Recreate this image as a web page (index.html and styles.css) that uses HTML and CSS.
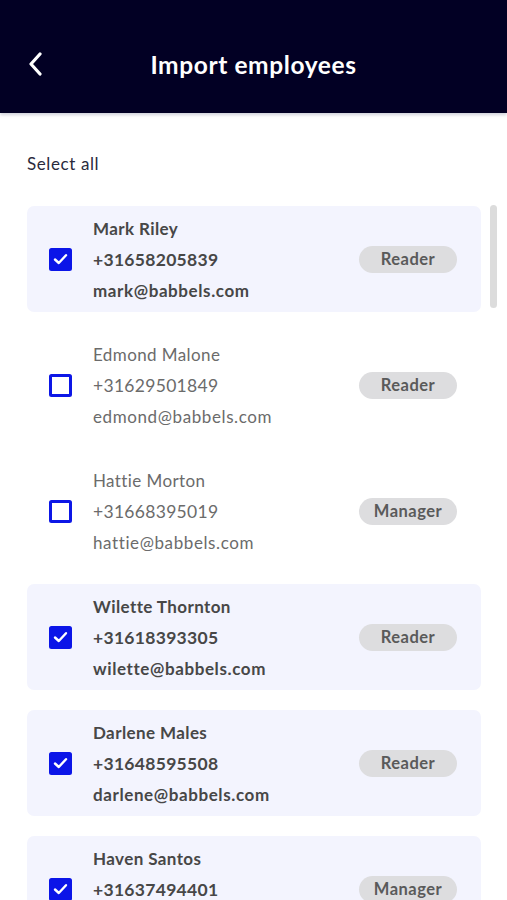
FILE: index.html
```html
<!DOCTYPE html>
<html lang="en">
<head>
<meta charset="utf-8">
<title>Import employees</title>
<link rel="stylesheet" href="styles.css">
</head>
<body>
<header class="topbar">
  <button class="back" aria-label="Back">
    <svg width="20" height="24" viewBox="0 0 20 24"><path d="M14 2 L5 12 L14 22" fill="none" stroke="#fff" stroke-width="3.2" stroke-linecap="round" stroke-linejoin="round"/></svg>
  </button>
  <h1 class="title">Import employees</h1>
  <span class="spacer"></span>
</header>

<main class="content">
  <div class="select-all">Select all</div>

  <div class="list">
    <div class="scrollbar"></div>

    <div class="card selected">
      <span class="check on"><svg width="15" height="12" viewBox="0 0 15 12"><path d="M2 6.5 L5.8 10 L13 2.2" fill="none" stroke="#fff" stroke-width="2.4" stroke-linecap="round" stroke-linejoin="round"/></svg></span>
      <div class="info"><div class="name">Mark Riley</div><div class="phone">+31658205839</div><div class="email">mark@babbels.com</div></div>
      <span class="badge">Reader</span>
    </div>

    <div class="card">
      <span class="check"></span>
      <div class="info"><div class="name">Edmond Malone</div><div class="phone">+31629501849</div><div class="email">edmond@babbels.com</div></div>
      <span class="badge">Reader</span>
    </div>

    <div class="card">
      <span class="check"></span>
      <div class="info"><div class="name">Hattie Morton</div><div class="phone">+31668395019</div><div class="email">hattie@babbels.com</div></div>
      <span class="badge">Manager</span>
    </div>

    <div class="card selected">
      <span class="check on"><svg width="15" height="12" viewBox="0 0 15 12"><path d="M2 6.5 L5.8 10 L13 2.2" fill="none" stroke="#fff" stroke-width="2.4" stroke-linecap="round" stroke-linejoin="round"/></svg></span>
      <div class="info"><div class="name">Wilette Thornton</div><div class="phone">+31618393305</div><div class="email">wilette@babbels.com</div></div>
      <span class="badge">Reader</span>
    </div>

    <div class="card selected">
      <span class="check on"><svg width="15" height="12" viewBox="0 0 15 12"><path d="M2 6.5 L5.8 10 L13 2.2" fill="none" stroke="#fff" stroke-width="2.4" stroke-linecap="round" stroke-linejoin="round"/></svg></span>
      <div class="info"><div class="name">Darlene Males</div><div class="phone">+31648595508</div><div class="email">darlene@babbels.com</div></div>
      <span class="badge">Reader</span>
    </div>

    <div class="card selected">
      <span class="check on"><svg width="15" height="12" viewBox="0 0 15 12"><path d="M2 6.5 L5.8 10 L13 2.2" fill="none" stroke="#fff" stroke-width="2.4" stroke-linecap="round" stroke-linejoin="round"/></svg></span>
      <div class="info"><div class="name">Haven Santos</div><div class="phone">+31637494401</div><div class="email">haven@babbels.com</div></div>
      <span class="badge">Manager</span>
    </div>
  </div>
</main>
</body>
</html>
```

FILE: styles.css
```css
* { box-sizing: border-box; }
html, body {
  margin: 0;
  padding: 0;
  background: #ffffff;
  font-family: "Lato", "Noto Sans", sans-serif;
  overflow: hidden;
  height: 900px;
}
.topbar {
  height: 113px;
  background: #020024;
  display: grid;
  grid-template-columns: 80px 1fr 80px;
  align-items: center;
  padding-top: 15px;
  box-shadow: 0 2px 3px rgba(120, 125, 150, 0.35);
  position: relative;
  z-index: 2;
}
.back {
  background: none;
  border: 0;
  padding: 0;
  margin-left: 26px;
  width: 20px;
  height: 24px;
  display: flex;
}
.title {
  margin: 0;
  text-align: center;
  color: #ffffff;
  font-size: 24.5px;
  font-weight: 700;
  letter-spacing: 0.6px;
}
.content {
  padding: 0 26px 0 27px;
}
.select-all {
  margin-top: 40px;
  font-size: 17px;
  letter-spacing: 0.6px;
  color: #2a2a3c;
  line-height: 22px;
}
.list {
  position: relative;
  margin-top: 31px;
  display: flex;
  flex-direction: column;
  gap: 20px;
}
.scrollbar {
  position: absolute;
  left: 463px;
  top: -1px;
  width: 7px;
  height: 103px;
  border-radius: 4px;
  background: #dcdcdc;
}
.card {
  height: 106px;
  border-radius: 7px;
  display: flex;
  align-items: center;
  padding: 0 24px 0 22px;
  color: #6b6b6b;
}
.card.selected {
  background: #f3f4fe;
  color: #474747;
}
.check {
  width: 23px;
  height: 23px;
  border: 3px solid #0d17e6;
  border-radius: 2.5px;
  margin-right: 21px;
  flex: none;
  display: flex;
  align-items: center;
  justify-content: center;
}
.check.on {
  background: #0b15e8;
  border-color: #0b15e8;
}
.info {
  flex: 1;
  line-height: 31px;
}
.name { font-size: 17px; letter-spacing: 0.4px; }
.phone { font-size: 17.5px; letter-spacing: 0.3px; }
.email { font-size: 17px; letter-spacing: 0.6px; }
.card.selected .info { font-weight: 700; }
.badge {
  width: 98px;
  height: 27px;
  border-radius: 14px;
  background: #dddddf;
  color: #5a5a5a;
  font-size: 16.5px;
  font-weight: 700;
  letter-spacing: 0.5px;
  display: flex;
  align-items: center;
  justify-content: center;
  flex: none;
}
```
